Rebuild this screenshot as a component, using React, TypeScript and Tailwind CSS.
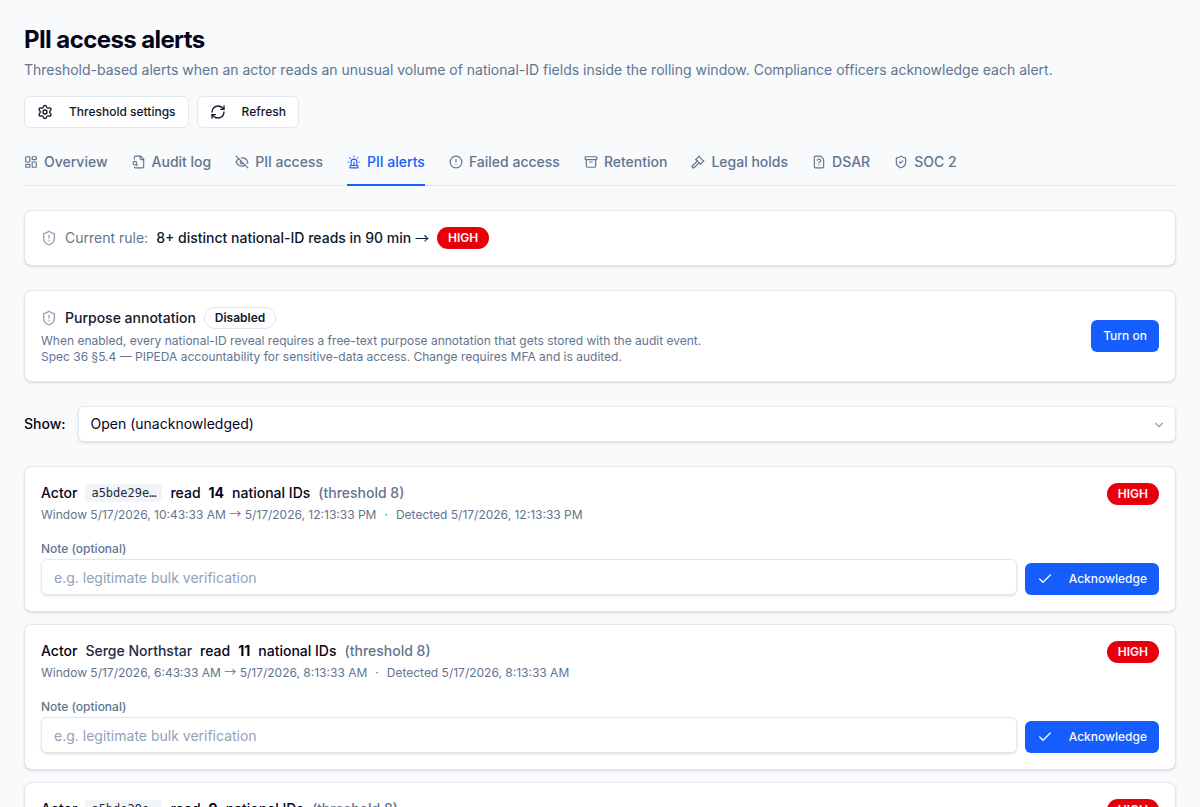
import type { ComponentType, ReactNode } from 'react';
import {
  Archive,
  Check,
  ChevronDown,
  CircleAlert,
  EyeOff,
  FileQuestionMark,
  Gavel,
  LayoutDashboard,
  RefreshCw,
  Settings,
  ShieldAlert,
  ShieldCheck,
  Siren,
} from 'lucide-react';

type IconType = ComponentType<{ className?: string }>;

function FileLens({ className }: { className?: string }) {
  return (
    <svg
      viewBox="0 0 24 24"
      fill="none"
      stroke="currentColor"
      strokeWidth="2"
      strokeLinecap="round"
      strokeLinejoin="round"
      aria-hidden="true"
      className={className}
    >
      <path d="M14 2v4a2 2 0 0 0 2 2h4" />
      <path d="M4.268 21a2 2 0 0 0 1.727 1H18a2 2 0 0 0 2-2V7l-5-5H6a2 2 0 0 0-2 2v3" />
      <path d="m9 18-1.5-1.5" />
      <circle cx="5" cy="14" r="3" />
    </svg>
  );
}

const tabs: { label: string; icon: IconType; active?: boolean }[] = [
  { label: 'Overview', icon: LayoutDashboard },
  { label: 'Audit log', icon: FileLens },
  { label: 'PII access', icon: EyeOff },
  { label: 'PII alerts', icon: Siren, active: true },
  { label: 'Failed access', icon: CircleAlert },
  { label: 'Retention', icon: Archive },
  { label: 'Legal holds', icon: Gavel },
  { label: 'DSAR', icon: FileQuestionMark },
  { label: 'SOC 2', icon: ShieldCheck },
];

type Alert = {
  id: string;
  actorId?: string;
  actorName?: string;
  reads: number;
  from: string;
  to: string;
};

const alerts: Alert[] = [
  { id: 'a1', actorId: 'a5bde29e…', reads: 14, from: '5/17/2026, 10:43:33 AM', to: '5/17/2026, 12:13:33 PM' },
  { id: 'a2', actorName: 'Serge Northstar', reads: 11, from: '5/17/2026, 6:43:33 AM', to: '5/17/2026, 8:13:33 AM' },
  { id: 'a3', actorId: 'a5bde29e…', reads: 9, from: '5/16/2026, 10:43:33 AM', to: '5/16/2026, 12:13:33 PM' },
];

function Card({ children }: { children: ReactNode }) {
  return (
    <section className="rounded-lg border border-slate-200 bg-white p-4 shadow-sm">{children}</section>
  );
}

function Arrow() {
  return <span className="font-['Noto_Sans_CJK_JP',sans-serif] leading-none font-normal">→</span>;
}

function HighBadge() {
  return (
    <span className="inline-flex shrink-0 items-center rounded-full border border-transparent bg-red-600 px-2.5 py-0.5 text-xs font-semibold text-slate-50">
      HIGH
    </span>
  );
}

function OutlineButton({ icon: Icon, children }: { icon: IconType; children: ReactNode }) {
  return (
    <button
      type="button"
      className="inline-flex h-8 items-center gap-4 rounded-md border border-slate-200 bg-white px-3 text-xs font-medium text-slate-900 hover:bg-slate-100"
    >
      <Icon className="size-4" />
      {children}
    </button>
  );
}

function AlertCard({ alert }: { alert: Alert }) {
  const noteId = `note-${alert.id}`;
  return (
    <Card>
      <div className="flex items-start justify-between gap-4">
        <div>
          <h2 className="flex flex-wrap items-center gap-2 text-sm font-medium">
            <span>Actor</span>
            {alert.actorId ? (
              <code className="rounded bg-slate-100 px-1.5 py-0.5 font-['DejaVu_Sans_Mono',monospace] text-xs leading-[14px] font-normal text-slate-800">
                {alert.actorId}
              </code>
            ) : (
              <span className="text-slate-800">{alert.actorName}</span>
            )}
            <span>read</span>
            <span className="font-bold">{alert.reads}</span>
            <span>national IDs</span>
            <span className="text-slate-500">(threshold 8)</span>
          </h2>
          <p className="mt-1 text-xs text-slate-500">
            Window {alert.from} <Arrow /> {alert.to}
            <span className="mx-2">·</span>
            Detected {alert.to}
          </p>
        </div>
        <HighBadge />
      </div>
      <div className="mt-4 flex items-end gap-2">
        <div className="flex-1">
          <label htmlFor={noteId} className="block text-xs leading-5 font-medium text-slate-500">
            Note (optional)
          </label>
          <input
            id={noteId}
            type="text"
            placeholder="e.g. legitimate bulk verification"
            className="block h-9 w-full rounded-md border border-slate-200 bg-white px-3 pt-px text-sm shadow-sm placeholder:text-slate-400"
          />
        </div>
        <button
          type="button"
          className="inline-flex h-8 items-center gap-4 rounded-md bg-blue-600 px-3 text-xs font-medium text-slate-50 hover:bg-blue-700"
        >
          <Check className="size-4" />
          Acknowledge
        </button>
      </div>
    </Card>
  );
}

export default function App() {
  return (
    <main className="flex min-h-screen flex-col gap-6 bg-slate-50 p-6 font-['Inter',sans-serif] text-slate-950">
      <header>
        <h1 className="text-2xl font-bold tracking-tight">PII access alerts</h1>
        <p className="mt-1 text-sm text-slate-500">
          Threshold-based alerts when an actor reads an unusual volume of national-ID fields inside the rolling window.
          Compliance officers acknowledge each alert.
        </p>
        <div className="mt-4 flex flex-wrap gap-2">
          <OutlineButton icon={Settings}>Threshold settings</OutlineButton>
          <OutlineButton icon={RefreshCw}>Refresh</OutlineButton>
        </div>
      </header>

      <nav aria-label="Compliance" className="flex gap-6 border-b border-gray-200">
        {tabs.map(({ label, icon: Icon, active }) => (
          <a
            key={label}
            href="#"
            aria-current={active ? 'page' : undefined}
            className={
              active
                ? '-mb-px flex items-center gap-1.5 border-b-2 border-blue-600 pb-3 text-sm font-medium text-blue-600'
                : '-mb-px flex items-center gap-1.5 border-b-2 border-transparent pb-3 text-sm font-medium text-slate-500'
            }
          >
            <Icon className="size-3.5" />
            {label}
          </a>
        ))}
      </nav>

      <Card>
        <div className="flex flex-wrap items-center gap-2 text-sm">
          <ShieldAlert className="size-4 text-slate-400" />
          <span className="text-slate-500">Current rule:</span>
          <span className="font-medium text-slate-900">
            8+ distinct national-ID reads in 90 min <Arrow />
          </span>
          <HighBadge />
        </div>
      </Card>

      <Card>
        <div className="flex items-center justify-between gap-4">
          <div>
            <h2 className="flex items-center gap-2 text-sm font-medium text-slate-900">
              <ShieldAlert className="size-4 text-slate-400" />
              Purpose annotation
              <span className="inline-flex items-center rounded-full border border-slate-200 px-2.5 py-0.5 text-xs font-semibold">
                Disabled
              </span>
            </h2>
            <p className="mt-1 max-w-2xl text-xs text-slate-500">
              When enabled, every national-ID reveal requires a free-text purpose annotation that gets stored with the
              audit event. Spec 36 §5.4 — PIPEDA accountability for sensitive-data access. Change requires MFA and is
              audited.
            </p>
          </div>
          <button
            type="button"
            className="h-8 shrink-0 rounded-md bg-blue-600 px-3 text-xs font-medium text-slate-50 hover:bg-blue-700"
          >
            Turn on
          </button>
        </div>
      </Card>

      <div className="flex items-center gap-3">
        <label htmlFor="status-filter" className="text-sm font-medium">
          Show:
        </label>
        <div className="relative flex-1">
          <select
            id="status-filter"
            className="block h-9 w-full appearance-none rounded-md border border-slate-200 bg-white px-3 text-sm shadow-sm"
          >
            <option>Open (unacknowledged)</option>
            <option>Acknowledged</option>
            <option>All</option>
          </select>
          <ChevronDown className="pointer-events-none absolute top-3 right-2.5 size-3.5 text-slate-400" />
        </div>
      </div>

      <div className="flex flex-col gap-3">
        {alerts.map((alert) => (
          <AlertCard key={alert.id} alert={alert} />
        ))}
      </div>
    </main>
  );
}
